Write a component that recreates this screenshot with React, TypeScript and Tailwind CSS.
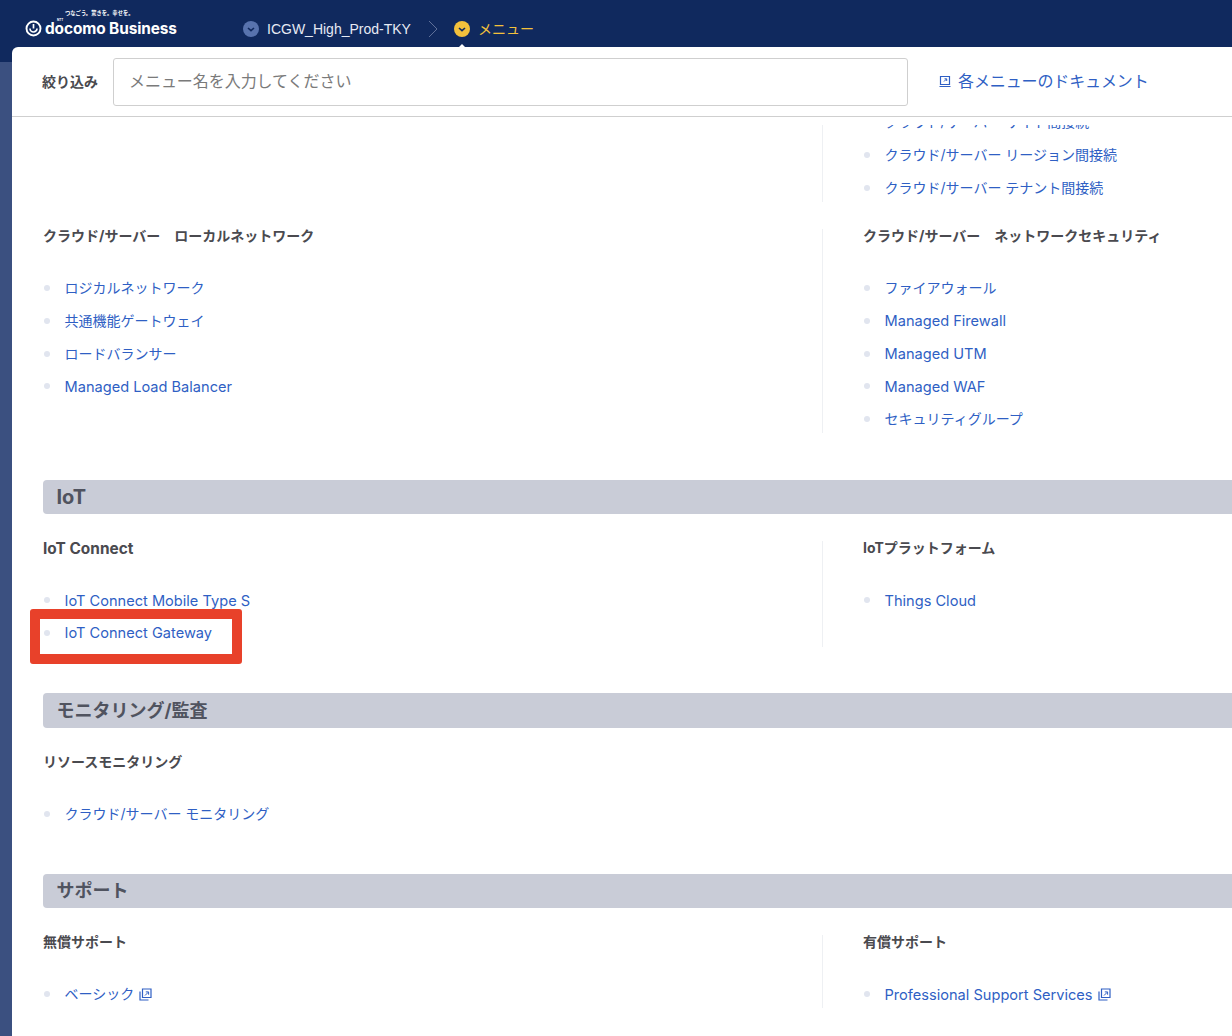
const font = "font-['Inter','Noto_Sans_CJK_JP',sans-serif]";
const isLatin = (s: string) => /^[\x00-\x7f]+$/.test(s);

function ExtIcon() {
  return (
    <svg width="13" height="13" viewBox="0 0 13 13" fill="none" stroke="#2f5fc4" strokeWidth="1.2" className="ml-[5px] inline-block shrink-0">
      <path d="M3.5 1h8.5v8.5h-8.5z" />
      <path d="M1 3.5v8.5h8.5" />
      <path d="M6 7.5l3.2-3.2M6.8 3.9H9.6V6.7" strokeWidth="1" />
    </svg>
  );
}

function Item({ label, ext }: { label: string; ext?: boolean }) {
  return (
    <li className="flex h-[28px] items-center">
      <span className="ml-px mr-[14.5px] h-[6px] w-[6px] shrink-0 rounded-full bg-[#e1e5ef]" />
      <a className={`flex items-center whitespace-nowrap leading-[28px] text-[#2f5fc4] ${isLatin(label) ? "pt-[1px] text-[14.6px]" : "text-[14px]"}`}>
        {label}
        {ext && <ExtIcon />}
      </a>
    </li>
  );
}

function Col({ title, items, ext }: { title?: string; items: string[]; ext?: boolean }) {
  return (
    <div>
      {title && (
        <h3 className={`mb-[31px] h-[14px] whitespace-nowrap font-bold leading-[14px] text-[#4a4a4f] ${isLatin(title) ? "pt-[1px] text-[15.4px]" : "text-[14px]"}`}>
          {title}
        </h3>
      )}
      <ul className="flex flex-col gap-[4.8px]">
        {items.map((i) => (
          <Item key={i} label={i} ext={ext} />
        ))}
      </ul>
    </div>
  );
}

function Row({ left, right }: { left?: React.ReactNode; right: React.ReactNode }) {
  return (
    <div className="flex">
      <div className="w-[780px] shrink-0 border-r border-[#eef0f3]">{left}</div>
      <div className="w-[380px] shrink-0 pl-[40px]">{right}</div>
    </div>
  );
}

function Bar({ label, first }: { label: string; first?: boolean }) {
  return (
    <h2 className={`mb-[27px] flex h-[34.4px] items-center rounded-l-[4px] bg-[#c9ccd7] pl-[13.5px] font-bold text-[#50535f] ${first ? "mt-[46.5px]" : "mt-[46.2px]"} ${isLatin(label) ? "text-[20px]" : "text-[18px]"}`}>
      {label}
    </h2>
  );
}

export default function App() {
  return (
    <div className={`${font} relative h-[1036px] w-[1232px] overflow-hidden bg-[#10295e]`}>
      <header className="flex h-[47px] items-start text-white">
        <div className="relative ml-[25px] h-[47px] w-[218px] shrink-0">
          <span className="absolute left-[40px] top-[9px] whitespace-nowrap text-[5.3px] font-bold leading-[8px] text-white">つなごう。驚きを。幸せを。</span>
          <span className="absolute left-[32px] top-[18px] text-[3px] font-bold leading-[4px] text-white">NTT</span>
          <div className="absolute left-0 top-[20px] flex items-center">
            <svg width="17" height="17" viewBox="0 0 17 17" fill="none" stroke="white">
              <circle cx="8.5" cy="8.5" r="7" strokeWidth="1.9" />
              <path d="M5 8.5a3.5 3.5 0 0 0 7 0" strokeWidth="1.7" />
              <path d="M8.5 4v4.5" strokeWidth="1.7" />
            </svg>
            <span className="ml-[3px] whitespace-nowrap text-[15.4px] font-bold leading-[13px] tracking-[-0.1px]">docomo Business</span>
          </div>
        </div>
        <div className="mt-[20px] flex items-center">
          <svg width="16" height="16" viewBox="0 0 16 16">
            <circle cx="8" cy="8" r="8" fill="#5873ae" />
            <path d="M5 7l3 2.6L11 7" fill="none" stroke="#10295e" strokeWidth="1.6" />
          </svg>
          <span className="ml-[8px] whitespace-nowrap font-['Liberation_Sans',sans-serif] text-[14px] leading-[16px] text-[#e6eaf4]">ICGW_High_Prod-TKY</span>
          <svg width="10" height="18" viewBox="0 0 10 18" fill="none" stroke="#5f7099" className="ml-[17px]">
            <path d="M1 1l8 8-8 8" strokeWidth="1" />
          </svg>
          <div className="relative ml-[16px] h-[16px] w-[16px]">
            <svg width="16" height="16" viewBox="0 0 16 16">
              <circle cx="8" cy="8" r="8" fill="#f3c13c" />
              <path d="M5 7l3 2.6L11 7" fill="none" stroke="#10295e" strokeWidth="1.6" />
            </svg>
            <span className="absolute left-[4px] top-[23px] h-0 w-0 border-x-[4px] border-b-[4px] border-x-transparent border-b-white" />
          </div>
          <span className="ml-[8px] whitespace-nowrap text-[14px] leading-[16px] text-[#f3c13c]">メニュー</span>
        </div>
      </header>

      <div className="flex h-[989px]">
        <div className="flex w-[12px] shrink-0 flex-col">
          <div className="h-[15px] bg-[#10295e]" />
          <div className="flex-1 bg-[#3b5080]" />
        </div>
        <main className="flex min-w-0 flex-1 flex-col overflow-hidden rounded-tl-[6px] bg-white">
          <div className="flex h-[70px] shrink-0 items-start border-b border-[#cfcfcf] pl-[30px] pt-[11px]">
            <span className="mt-[14px] w-[71px] shrink-0 whitespace-nowrap text-[14px] font-bold leading-[20px] text-[#4a4a4f]">絞り込み</span>
            <div className="flex h-[48px] w-[795px] shrink-0 items-center rounded-[3px] border border-[#cfcfcf] pb-[2px] pl-[15px] text-[16px] tracking-[-0.05px] text-[#7a7a7a]">
              メニュー名を入力してください
            </div>
            <a className="ml-[31px] mt-[12px] flex items-center whitespace-nowrap text-[16px] leading-[22px] tracking-[-0.12px] text-[#2f5fc4]">
              <svg width="12" height="13" viewBox="0 0 12 13" fill="none" stroke="#2f5fc4" className="mr-[7px]">
                <path d="M1.5 1.5h9v8h-9z" strokeWidth="1.2" />
                <path d="M0.5 11.5h11" strokeWidth="1.2" />
                <path d="M5 6.5l2.5-2.5M5.5 3.8h2.2V6" strokeWidth="1" />
              </svg>
              各メニューのドキュメント
            </a>
          </div>
          <div className="mt-[8px] flex-1 overflow-hidden pl-[31px]">
            <div className="-mt-[17px] w-[1200px]">
              <Row
                right={
                  <Col
                    items={[
                      "クラウド/サーバー サイト間接続",
                      "クラウド/サーバー リージョン間接続",
                      "クラウド/サーバー テナント間接続",
                    ]}
                  />
                }
              />
              <div className="mt-[27.5px]" />
              <Row
                left={<Col title="クラウド/サーバー　ローカルネットワーク" items={["ロジカルネットワーク", "共通機能ゲートウェイ", "ロードバランサー", "Managed Load Balancer"]} />}
                right={<Col title="クラウド/サーバー　ネットワークセキュリティ" items={["ファイアウォール", "Managed Firewall", "Managed UTM", "Managed WAF", "セキュリティグループ"]} />}
              />
              <Bar label="IoT" first />
              <Row
                left={<Col title="IoT Connect" items={["IoT Connect Mobile Type S", "IoT Connect Gateway"]} />}
                right={<Col title="IoTプラットフォーム" items={["Things Cloud"]} />}
              />
              <Bar label="モニタリング/監査" />
              <Col title="リソースモニタリング" items={["クラウド/サーバー モニタリング"]} />
              <Bar label="サポート" />
              <Row
                left={<Col title="無償サポート" items={["ベーシック"]} ext />}
                right={<Col title="有償サポート" items={["Professional Support Services"]} ext />}
              />
            </div>
          </div>
        </main>
      </div>

      <div className="absolute left-[30px] top-[609px] h-[55px] w-[212px] rounded-[3px] border-[10px] border-[#e8412a]" />
    </div>
  );
}
